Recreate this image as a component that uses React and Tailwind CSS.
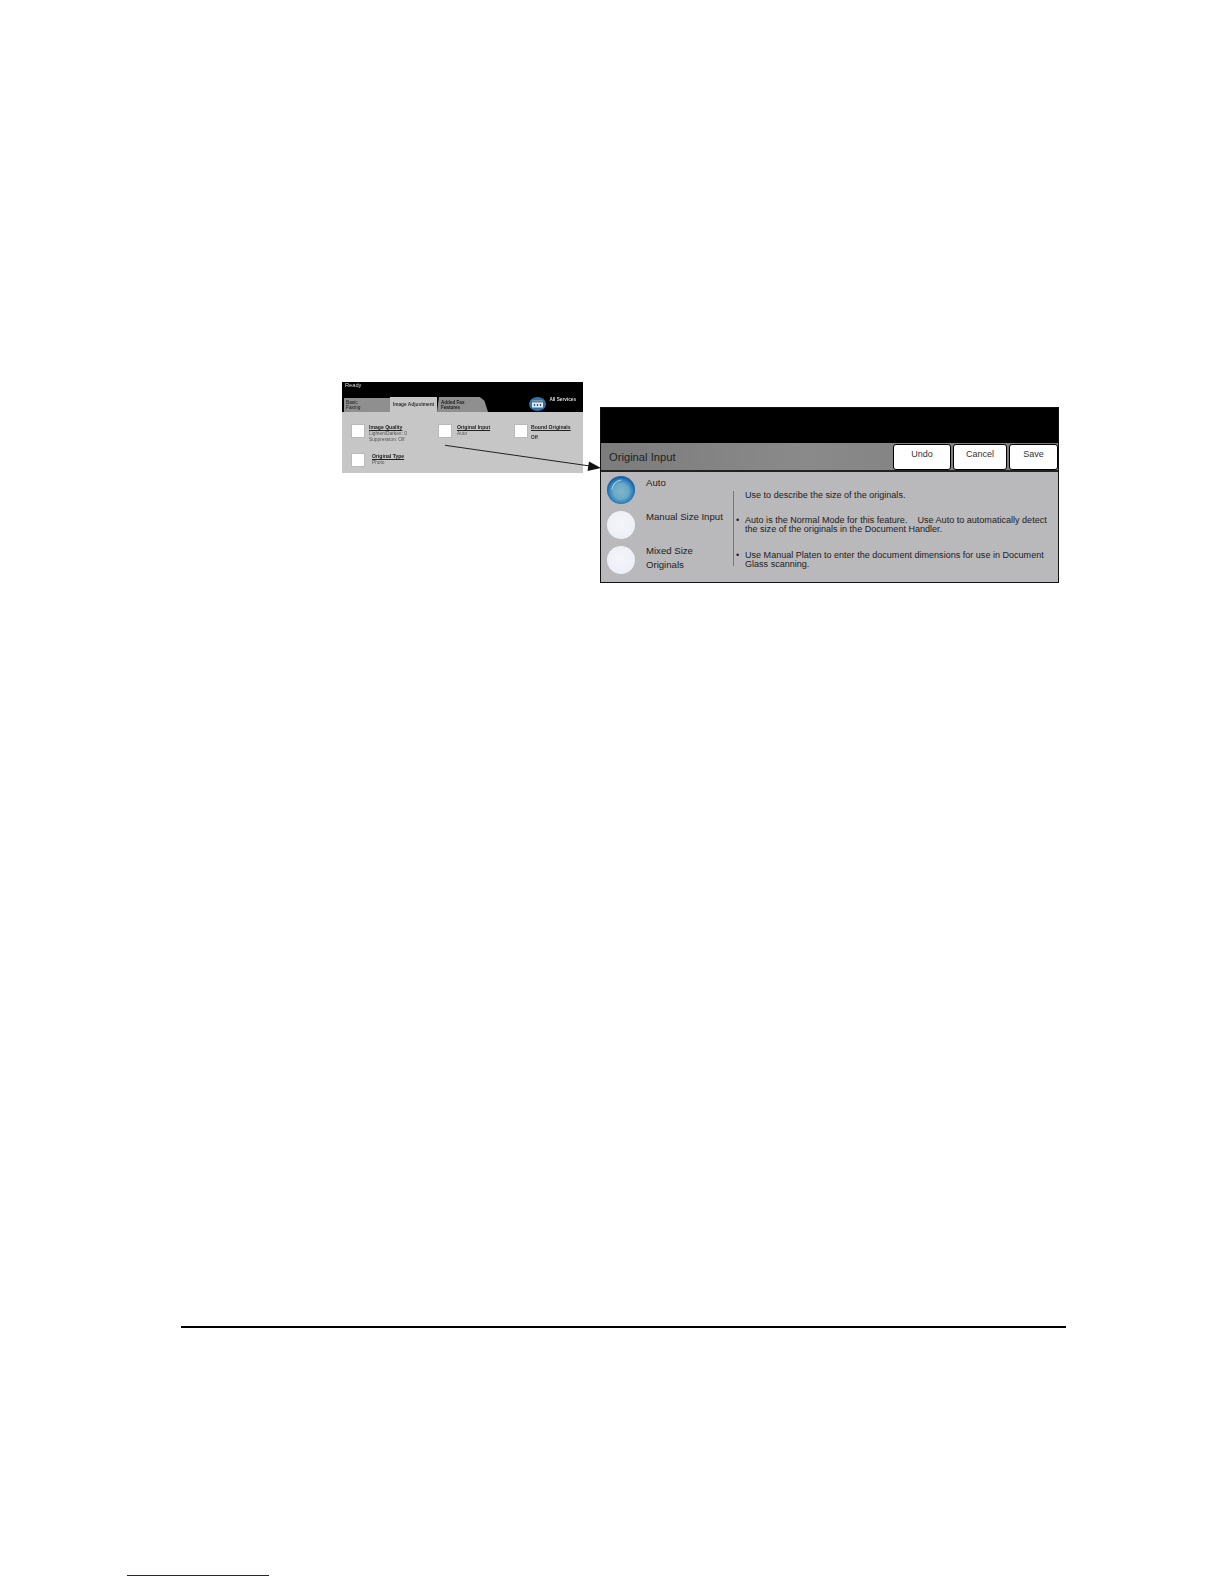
const font = "font-['Liberation_Sans',Arial,sans-serif]";

const SmallOption = ({ title, lines = [], strongLine, textGap }) => (
  <div className="flex items-start">
    <div className="h-[14px] w-[14px] shrink-0 border border-[#b9b9b9] bg-white" />
    <div className={`text-[4.8px] leading-[6.5px] whitespace-nowrap text-[#555] ${textGap}`}>
      <p className="text-[5.1px] font-bold text-[#222] underline decoration-[0.4px] underline-offset-[0.5px]">{title}</p>
      {lines.map((line) => (
        <p key={line}>{line}</p>
      ))}
      {strongLine && <p className="mt-[4.5px] font-bold text-[#333]">{strongLine}</p>}
    </div>
  </div>
);

const SmallPanel = () => (
  <div className="h-[91px] w-[241px] shrink-0 bg-[#c6c6c6] blur-[0.4px]">
    <div className="flex h-[30px] flex-col justify-between bg-black px-[2px]">
      <p className="pl-px text-[5.7px] leading-[7px] text-[#ddd]">Ready</p>
      <div className="flex items-end">
        <div className="flex h-[14px] w-[46px] items-center bg-[#8f8f8f] pl-[2px] text-[4.8px] leading-[5.5px] text-[#222]">
          Basic<br />Faxing
        </div>
        <div className="flex h-[15px] w-[47px] items-center justify-center bg-[#c6c6c6] text-[4.8px] font-bold whitespace-nowrap text-[#333]">
          Image Adjustment
        </div>
        <div className="flex h-[15px] w-[51px] items-center bg-[#8f8f8f] pl-[4px] text-[4.6px] leading-[5px] font-bold text-[#222] [clip-path:polygon(2px_0,84%_0,93%_25%,100%_100%,0_100%)]">
          Added Fax<br />Features
        </div>
        <div className="mb-px ml-auto mr-[5px] flex items-start gap-[3px]">
          <svg width="17" height="14" viewBox="0 0 17 14">
            <ellipse cx="8.5" cy="7" rx="8.5" ry="7" fill="#2f73ad" />
            <rect x="3" y="3.5" width="11" height="7" fill="#dfe8f1" />
            <rect x="3" y="3.5" width="11" height="2" fill="#5f7f9d" />
            <path d="M5.5 7v2M8.5 7v2M11.5 7v2" stroke="#34506b" strokeWidth="1.2" />
          </svg>
          <span className="whitespace-nowrap text-[4.7px] leading-[5px] font-bold text-[#ddd]">All Services</span>
        </div>
      </div>
    </div>
    <div className="grid grid-cols-[87px_76px_1fr] grid-rows-[29px_auto] pl-[9px] pt-[12px]">
      <SmallOption title="Image Quality" lines={["Lighten/Darken: 0", "Suppression: Off"]} textGap="ml-[4px]" />
      <SmallOption title="Original Input" lines={["Auto"]} textGap="ml-[5px]" />
      <SmallOption title="Bound Originals" strongLine="Off" textGap="ml-[3px]" />
      <SmallOption title="Original Type" lines={["Photo"]} textGap="ml-[7px]" />
    </div>
  </div>
);

const Radio = ({ selected }) =>
  selected ? (
    <svg width="28" height="28" viewBox="0 0 28 28" className="shrink-0">
      <defs>
        <radialGradient id="radioOn" cx="50%" cy="55%" r="50%">
          <stop offset="0%" stopColor="#80b6c9" />
          <stop offset="55%" stopColor="#69a8c6" />
          <stop offset="85%" stopColor="#2f80bd" />
          <stop offset="100%" stopColor="#1b62a6" />
        </radialGradient>
      </defs>
      <circle cx="14" cy="14" r="14" fill="url(#radioOn)" />
      <path d="M5 13C6 8 9 5 14 4" fill="none" stroke="#a9d3e0" strokeWidth="1.2" strokeLinecap="round" />
    </svg>
  ) : (
    <div className="h-[28px] w-[28px] shrink-0 rounded-full bg-[radial-gradient(circle_at_50%_45%,#f4f5fa_0%,#eef0f7_65%,#e0e1ea_100%)]" />
  );

const ActionButton = ({ label, width }) => (
  <button className={`h-[26px] rounded-[3px] border border-black bg-white pb-[5px] text-[9px] text-[#333] ${width}`}>
    {label}
  </button>
);

const LargePanel = () => (
  <div className="ml-[17px] mt-[25px] h-[176px] w-[459px] border border-[#111] bg-[#b9b8ba]">
    <div className="h-[35px] bg-black" />
    <div className="flex h-[29px] items-center justify-between border-b-2 border-[#222] bg-[linear-gradient(90deg,#7c7c7c,#8b8a8a_45%,#7a7a7a)] pl-[8px]">
      <span className="mt-[2px] text-[11.2px] text-[#222]">Original Input</span>
      <div className="flex gap-[2px] self-start pt-px">
        <ActionButton label="Undo" width="w-[58px]" />
        <ActionButton label="Cancel" width="w-[54px]" />
        <ActionButton label="Save" width="w-[49px]" />
      </div>
    </div>
    <div className="flex pl-[6px] text-[#222]">
      <div className="flex w-[126px] shrink-0 flex-col gap-[7px] pt-[4px] text-[9.6px] leading-[14px]">
        <div className="flex gap-[11px]">
          <Radio selected />
          <span>Auto</span>
        </div>
        <div className="flex gap-[11px]">
          <Radio />
          <span className="-mt-px whitespace-nowrap">Manual Size Input</span>
        </div>
        <div className="flex gap-[11px]">
          <Radio />
          <span className="-mt-[2px]">
            Mixed Size<br />Originals
          </span>
        </div>
      </div>
      <div className="mt-[19px] h-[75px] border-l border-[#777] pl-[2px] text-[9.05px] leading-[9px] whitespace-nowrap">
        <p className="pl-[9px]">Use to describe the size of the originals.</p>
        <div className="mt-[15.5px] flex">
          <span className="w-[9px]">•</span>
          <p>
            Auto is the Normal Mode for this feature.&nbsp;&nbsp;&nbsp; Use Auto to automatically detect<br />
            the size of the originals in the Document Handler.
          </p>
        </div>
        <div className="mt-[17.5px] flex">
          <span className="w-[9px]">•</span>
          <p>
            Use Manual Platen to enter the document dimensions for use in Document<br />
            Glass scanning.
          </p>
        </div>
      </div>
    </div>
  </div>
);

export default function App() {
  return (
    <div className={`relative flex h-[1584px] w-[1224px] flex-col bg-white ${font}`}>
      <div className="flex pl-[342px] pt-[382px]">
        <SmallPanel />
        <LargePanel />
      </div>

      {/* callout arrow from the small screen to the big one */}
      <svg className="absolute left-[440px] top-[441px]" width="165" height="35" viewBox="0 0 165 35">
        <line x1="5" y1="4.3" x2="152" y2="25.3" stroke="#222" strokeWidth="1" />
        <polygon points="161,27 149,20.5 147.5,30" fill="#111" />
      </svg>

      <div className="ml-[181px] mt-[743px] h-[2px] w-[885px] bg-black" />
      <div className="ml-[127px] mt-[247px] h-px w-[142px] bg-[#1a1a8c]" />
    </div>
  );
}
